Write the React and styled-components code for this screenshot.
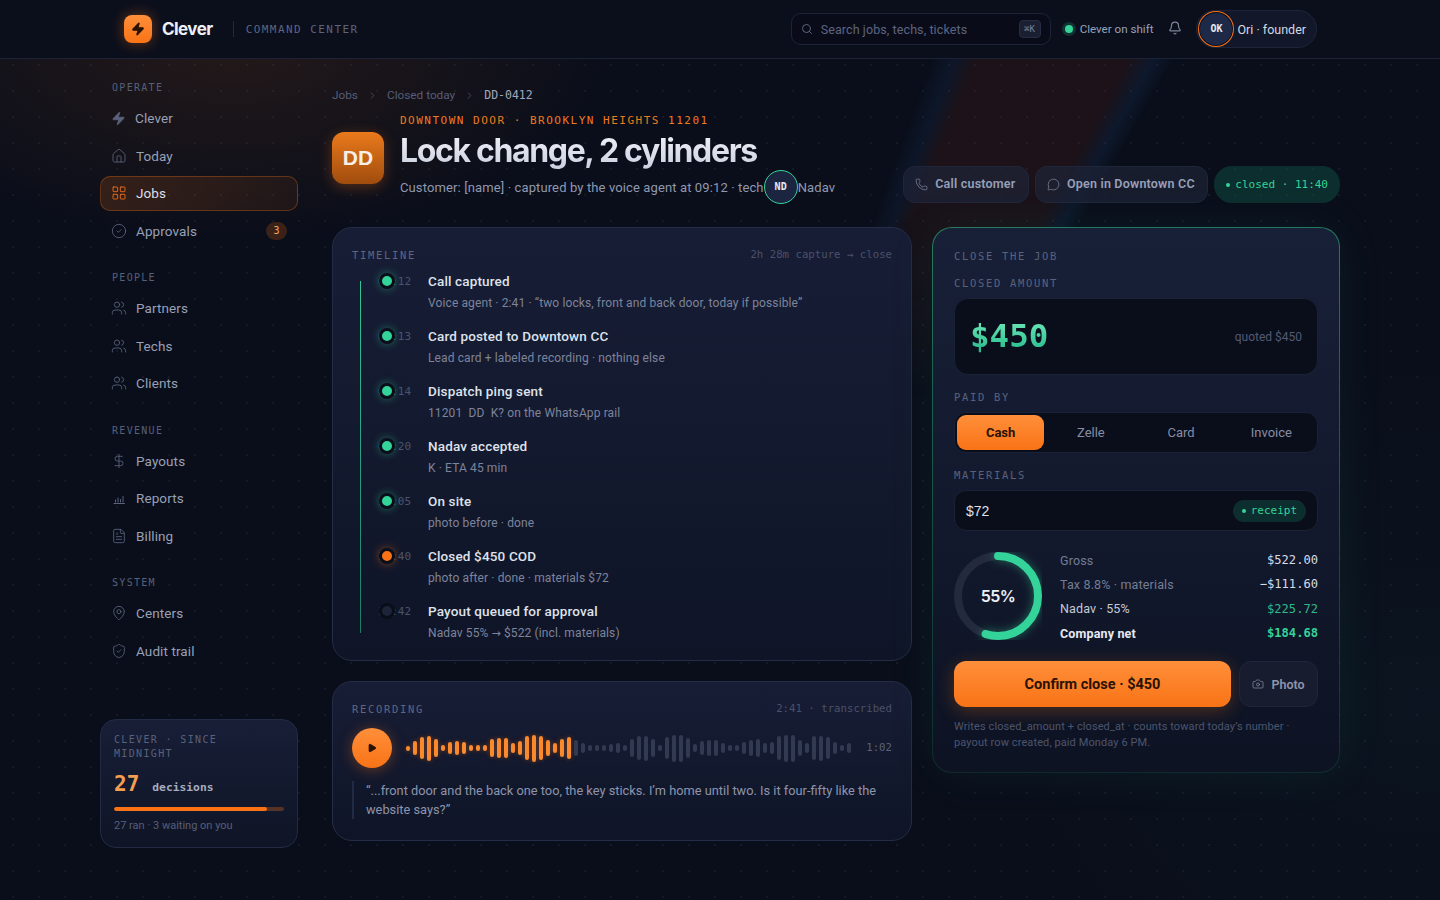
import React from "react";
import styled, { createGlobalStyle } from "styled-components";
import { Zap, Home, LayoutGrid, CircleCheck, Users, DollarSign, FileText, MapPin, ShieldCheck, Bell, Search, Phone, MessageCircle, Camera, ChevronRight, Play } from "lucide-react";

const SANS = `"Roboto", "Liberation Sans", sans-serif`;
const HEAD = `"Inter", "Liberation Sans", sans-serif`;
const MONO = `"DejaVu Sans Mono", "Liberation Mono", monospace`;

const Global = createGlobalStyle`
  html, body { margin: 0; padding: 0; height: 100%; background: #0a0e1a; }
  * { box-sizing: border-box; }
  body { font-family: ${SANS}; color: #c6cbdc; overflow: hidden; }
`;

const Page = styled.div`
  position: relative;
  width: 1440px;
  height: 900px;
  overflow: hidden;
  background:
    radial-gradient(circle at 13px 13px, rgba(150,165,210,.08) .8px, transparent 1.3px) 0 0 / 26px 26px,
    radial-gradient(520px 270px at 230px 40px, rgba(249,115,22,.11), transparent 74%),
    radial-gradient(600px 500px at 1420px 700px, rgba(20,90,90,.08), transparent 70%),
    #0a0e1a;
  &::before {
    content: "";
    position: absolute;
    inset: 0;
    background: conic-gradient(from 15deg at 505px 1216px,
      transparent 5.2deg, rgba(30,70,125,.16) 6.2deg, rgba(125,42,20,.16) 7.2deg,
      rgba(125,42,20,.16) 13.3deg, rgba(30,75,130,.18) 14.3deg, transparent 15.1deg);
    -webkit-mask-image: linear-gradient(#000 180px, transparent 400px);
    mask-image: linear-gradient(#000 180px, transparent 400px);
  }
`;

const Top = styled.header`
  position: relative;
  height: 59px;
  background: #0b0f1c;
  border-bottom: 1px solid #1d2336;
`;
const TopInner = styled.div`
  width: 1240px;
  height: 58px;
  margin: 0 auto;
  padding: 0 23px 0 24px;
  display: flex;
  align-items: center;
`;
const Logo = styled.div`
  width: 28px;
  height: 28px;
  border-radius: 8px;
  background: linear-gradient(#ff8f3a, #f97316);
  box-shadow: 0 0 14px rgba(249,115,22,.4);
  display: flex;
  align-items: center;
  justify-content: center;
  color: #2a1204;
`;
const Brand = styled.div`
  margin-left: 10px;
  font: 700 17px/1 ${HEAD};
  letter-spacing: -0.55px;
  color: #eef0f7;
`;
const Divider = styled.div`
  width: 1px;
  height: 16px;
  background: #232a3f;
  margin: 0 12px 0 20px;
`;
const Tagline = styled.div`
  font: 400 11px/1 ${MONO};
  letter-spacing: 1.45px;
  color: #5c6480;
`;
const SearchBox = styled.div`
  margin-left: auto;
  width: 260px;
  height: 32px;
  border: 1px solid #1e2438;
  border-radius: 10px;
  background: #090c18;
  display: flex;
  align-items: center;
  padding: 0 9px 0 9px;
  gap: 8px;
  color: #5c6480;
  font-size: 12.5px;
  letter-spacing: .1px;
`;
const Kbd = styled.span`
  margin-left: auto;
  width: 22px;
  height: 18px;
  border-radius: 4px;
  border: 1px solid #262d42;
  background: #1a2031;
  font: 400 9px/16px ${MONO};
  text-align: center;
  color: #78809b;
`;
const Shift = styled.div`
  margin-left: 13px;
  display: flex;
  align-items: center;
  gap: 7px;
  font-size: 11.6px;
  color: #9aa1b8;
`;
const GreenDot = styled.span`
  width: 8px;
  height: 8px;
  margin: 0 0 0 1px;
  border-radius: 50%;
  background: #34d399;
  box-shadow: 0 0 0 3px rgba(52,211,153,.18);
`;
const BellBtn = styled.div`
  margin: -2px 14px 0 15px;
  display: flex;
  color: #7d849c;
`;
const UserPill = styled.div`
  height: 38px;
  padding: 0 10px 0 2px;
  border-radius: 19px;
  border: 1px solid #1f2539;
  background: #121729;
  display: flex;
  align-items: center;
  gap: 3px;
  font-size: 12.5px;
  color: #d3d7e4;
`;
const UserAvatar = styled.div`
  width: 32px;
  height: 32px;
  border-radius: 50%;
  background: #1e2947;
  box-shadow: 0 0 0 1px #0b0f1c, 0 0 0 2px #f97316;
  margin-left: 1px;
  margin-right: 2px;
  font: 700 10px/32px ${MONO};
  text-align: center;
  color: #e6e9f3;
`;

const Shell = styled.div`
  position: relative;
  width: 1240px;
  height: 841px;
  margin: 0 auto;
  display: flex;
  gap: 32px;
`;

const Side = styled.aside`
  width: 200px;
  flex: none;
  padding: 22px 2px 52px 0;
  display: flex;
  flex-direction: column;
`;
const Group = styled.div`
  display: flex;
  flex-direction: column;
  gap: 2.5px;
  margin-bottom: 23px;
`;
const GroupLabel = styled.div`
  font: 400 10px/14px ${MONO};
  letter-spacing: 1.3px;
  color: #56607a;
  padding-left: 12px;
  margin-bottom: 3px;
`;
const NavItem = styled.div`
  height: 35px;
  border-radius: 10px;
  padding: 0 10px;
  display: flex;
  align-items: center;
  gap: 9px;
  font-size: 13.5px;
  letter-spacing: .1px;
  color: ${p => (p.$active ? "#dcdfea" : "#98a0b6")};
  border: 1px solid ${p => (p.$active ? "rgba(249,115,22,.3)" : "transparent")};
  background: ${p => (p.$active ? "linear-gradient(90deg, rgba(249,115,22,.16), rgba(249,115,22,.07))" : "none")};
  svg { color: ${p => (p.$active ? "#f97316" : "#5a627c")}; flex: none; }
`;
const Count = styled.span`
  margin-left: auto;
  width: 21px;
  height: 18px;
  border-radius: 9px;
  background: rgba(249,115,22,.2);
  font: 400 10px/18px ${MONO};
  text-align: center;
  color: #fba35e;
`;
const StatCard = styled.div`
  margin-top: auto;
  width: 198px;
  height: 129px;
  padding: 13px 13px;
  border-radius: 16px;
  border: 1px solid #232b44;
  background: linear-gradient(#171e36, #0f1526);
`;
const StatLabel = styled.div`
  max-width: 150px;
  font: 400 10px/14px ${MONO};
  letter-spacing: 1.35px;
  color: #59617b;
`;
const StatRow = styled.div`
  margin-top: 8px;
  display: flex;
  align-items: baseline;
  gap: 13px;
`;
const StatNum = styled.div`
  font: 700 21px/30px ${MONO};
  color: #f59e50;
`;
const StatWord = styled.div`
  font: 700 11.3px/1 ${MONO};
  color: #a6acbf;
`;
const Progress = styled.div`
  margin-top: 8px;
  height: 4px;
  border-radius: 2px;
  background: rgba(249,115,22,.3);
  overflow: hidden;
`;
const ProgressFill = styled.div`
  height: 100%;
  border-radius: 2px;
  background: #f97316;
`;
const StatFoot = styled.div`
  margin-top: 8px;
  font-size: 11px;
  line-height: 14px;
  color: #565e78;
`;

const Main = styled.main`
  flex: 1;
  min-width: 0;
  padding-top: 28px;
`;
const Crumbs = styled.div`
  display: flex;
  align-items: center;
  gap: 9px;
  height: 16px;
  font-size: 11.8px;
  color: #555d78;
  svg { color: #434a62; }
`;
const CrumbHere = styled.span`
  font: 400 11.5px/16px ${MONO};
  color: #a0a7bc;
`;
const Head = styled.div`
  display: flex;
  margin-top: 10px;
  height: 92px;
`;
const JobAvatar = styled.div`
  width: 52px;
  height: 52px;
  margin-top: 19px;
  margin-right: 16px;
  border-radius: 12px;
  background: linear-gradient(#ea7a1c, #a04c0e);
  box-shadow: 0 3px 14px rgba(249,115,22,.3);
  font: 700 21px/52px "Liberation Sans", sans-serif;
  text-align: center;
  color: #f6efe7;
`;
const HeadText = styled.div``;
const Eyebrow = styled.div`
  font: 400 11px/16px ${MONO};
  letter-spacing: 1.5px;
  color: #ee7a1f;
  white-space: pre;
`;
const Title = styled.h1`
  margin: 3px 0 0;
  font: 700 32px/38px ${HEAD};
  letter-spacing: -1.35px;
  background: linear-gradient(#f2f3f8, #c9cfe0);
  -webkit-background-clip: text;
  background-clip: text;
  color: transparent;
  width: max-content;
`;
const Sub = styled.div`
  margin-top: -1px;
  display: flex;
  align-items: center;
  height: 36px;
  font-size: 13px;
  letter-spacing: .12px;
  color: #9098b0;
  white-space: nowrap;
`;
const TechAvatar = styled.span`
  width: 34px;
  height: 34px;
  flex: none;
  border-radius: 50%;
  background: #1c2540;
  border: 1.5px solid #34d399;
  font: 700 10px/31px ${MONO};
  text-align: center;
  color: #e6e9f3;
`;
const Actions = styled.div`
  margin-left: auto;
  margin-top: 53px;
  display: flex;
  gap: 6px;
  height: 37px;
`;
const Ghost = styled.div`
  height: 37px;
  padding: 0 12.5px 0 11px;
  border-radius: 12px;
  border: 1px solid #20263a;
  background: rgba(30,36,56,.7);
  display: flex;
  align-items: center;
  gap: 7px;
  font: 600 12.5px/1 ${SANS};
  letter-spacing: .2px;
  color: #97a0b8;
  svg { color: #7b839c; }
`;
const ClosedPill = styled.div`
  height: 37px;
  padding: 0 12px;
  border-radius: 18px;
  background: rgba(20,90,75,.42);
  display: flex;
  align-items: center;
  gap: 5px;
  font: 400 11px/1 ${MONO};
  color: #34d399;
  white-space: pre;
`;
const TinyDot = styled.span`
  width: 4px;
  height: 4px;
  border-radius: 50%;
  background: #34d399;
`;

const Columns = styled.div`
  margin-top: 22px;
  display: flex;
  gap: 20px;
  align-items: flex-start;
`;
const LeftCol = styled.div`
  width: 580px;
  display: flex;
  flex-direction: column;
  gap: 20px;
`;
const Panel = styled.section`
  border-radius: 20px;
  border: 1px solid #252c45;
  background: linear-gradient(#171d35, #0f1527);
  padding: 20px 19px 21px;
`;
const PanelHead = styled.div`
  display: flex;
  justify-content: space-between;
  align-items: center;
  height: 14px;
`;
const PanelTitle = styled.div`
  font: 400 10.5px/14px ${MONO};
  letter-spacing: 1.68px;
  color: #5f6780;
`;
const PanelMeta = styled.div`
  font: 400 10.7px/14px ${MONO};
  color: #4a5169;
  white-space: pre;
`;
const Timeline = styled.div`
  position: relative;
  margin-top: 6px;
  padding-left: 26px;
  &::before {
    content: "";
    position: absolute;
    left: 8px;
    top: 13px;
    height: 352px;
    width: 1px;
    background: linear-gradient(#34c596, #1f7a68);
  }
`;
const Row = styled.div`
  position: relative;
  display: flex;
  height: 55px;
  padding-top: 4px;
  &:last-child { height: 41px; }
`;
const Time = styled.div`
  width: 50px;
  flex: none;
  font: 400 11px/20px ${MONO};
  color: #4b536c;
`;
const Dot = styled.span`
  position: absolute;
  left: 1px;
  top: 5px;
  width: 16px;
  height: 16px;
  border-radius: 50%;
  border: 3px solid #0a0e1a;
  background: ${p => p.$c};
  box-shadow: 0 0 8px ${p => p.$glow};
`;
const RowTitle = styled.div`
  font-size: 13.5px;
  font-weight: 500;
  line-height: 18px;
  letter-spacing: .15px;
  color: #dfe2ec;
`;
const RowSub = styled.div`
  margin-top: 4px;
  font-size: 12px;
  line-height: 18px;
  letter-spacing: .12px;
  color: #7d849c;
  white-space: pre;
`;
const Arrow = styled.span`
  font-family: "DejaVu Sans", sans-serif;
  font-size: 11px;
`;
const Player = styled.div`
  display: flex;
  align-items: center;
  margin-top: 12px;
`;
const PlayBtn = styled.div`
  width: 40px;
  height: 40px;
  border-radius: 50%;
  flex: none;
  background: linear-gradient(#ff8f3a, #f97316);
  box-shadow: 0 2px 14px rgba(249,115,22,.35);
  display: flex;
  align-items: center;
  justify-content: center;
  color: #2a1204;
  margin-right: 14px;
`;
const Wave = styled.div`
  display: flex;
  align-items: center;
  gap: 3px;
  height: 30px;
`;
const Bar = styled.span`
  width: 4px;
  border-radius: 2px;
  background: ${p => (p.$on ? "#f98a2e" : "#323a52")};
  box-shadow: ${p => (p.$on ? "0 0 5px rgba(249,115,22,.4)" : "none")};
`;
const Elapsed = styled.div`
  margin-left: auto;
  font: 400 10.7px/1 ${MONO};
  color: #5a627b;
`;
const Quote = styled.blockquote`
  margin: 13px 0 0;
  border-left: 2px solid #222a44;
  padding-left: 12px;
  font-size: 12.8px;
  line-height: 19px;
  color: #8d94ac;
`;

const ClosePanel = styled.section`
  width: 408px;
  border-radius: 20px;
  border: 1px solid transparent;
  background:
    linear-gradient(#182038, #0d1323) padding-box,
    linear-gradient(rgba(52,211,153,.55), rgba(52,211,153,.14)) border-box;
  box-shadow: 0 0 50px rgba(52,211,153,.07);
  padding: 21px 21px 21px;
`;
const FieldLabel = styled.div`
  font: 400 10.5px/14px ${MONO};
  letter-spacing: 1.68px;
  color: #5a627b;
  margin-top: ${p => p.$mt || 0}px;
`;
const AmountBox = styled.div`
  margin-top: 8px;
  height: 77px;
  border-radius: 14px;
  border: 1px solid #1c2236;
  background: #0a0e1b;
  display: flex;
  align-items: center;
  justify-content: space-between;
  padding: 0 15px;
`;
const Amount = styled.div`
  font: 700 32.5px/1 ${MONO};
  background: linear-gradient(#6ee7b7, #22b98a);
  -webkit-background-clip: text;
  background-clip: text;
  color: transparent;
`;
const Quoted = styled.div`
  font-size: 12px;
  color: #525a74;
`;
const Segs = styled.div`
  margin-top: 8px;
  height: 41px;
  border-radius: 12px;
  border: 1px solid #1c2236;
  background: #0a0e1b;
  padding: 2px;
  display: grid;
  grid-template-columns: repeat(4, 1fr);
  gap: 3px;
`;
const Seg = styled.div`
  border-radius: 9px;
  display: flex;
  align-items: center;
  justify-content: center;
  font-size: 13px;
  font-weight: ${p => (p.$on ? 700 : 400)};
  color: ${p => (p.$on ? "#2a1204" : "#858ca4")};
  background: ${p => (p.$on ? "linear-gradient(#ff8f3a, #f97316)" : "none")};
`;
const MatBox = styled.div`
  margin-top: 8px;
  height: 41px;
  border-radius: 12px;
  border: 1px solid #1c2236;
  background: #0a0e1b;
  display: flex;
  align-items: center;
  justify-content: space-between;
  padding: 0 11px;
  font: 400 14px/1 "Liberation Sans", sans-serif;
  color: #dde0ea;
`;
const Receipt = styled.div`
  height: 22px;
  padding: 0 9px;
  border-radius: 11px;
  background: rgba(20,90,75,.42);
  display: flex;
  align-items: center;
  gap: 5px;
  font: 400 11px/1 ${MONO};
  color: #34d399;
`;
const Split = styled.div`
  margin-top: 21px;
  height: 88px;
  display: flex;
  gap: 18px;
`;
const RingWrap = styled.div`
  position: relative;
  width: 88px;
  height: 88px;
  flex: none;
`;
const RingLabel = styled.div`
  position: absolute;
  inset: 0;
  display: flex;
  align-items: center;
  justify-content: center;
  font: 600 16px/1 ${HEAD};
  letter-spacing: -.5px;
  color: #eef0f7;
`;
const Lines = styled.div`
  flex: 1;
  display: flex;
  flex-direction: column;
  gap: 6.4px;
  margin-top: -1px;
`;
const Line = styled.div`
  height: 18px;
  flex: none;
  display: flex;
  justify-content: space-between;
  align-items: center;
  font-size: 12.5px;
  letter-spacing: .15px;
  font-weight: ${p => (p.$bold ? 700 : 400)};
  color: ${p => p.$c};
`;
const Val = styled.span`
  font: ${p => (p.$bold ? 700 : 400)} 12.1px/1 ${MONO};
  letter-spacing: 0;
  color: ${p => p.$c};
`;
const Buttons = styled.div`
  margin-top: 21px;
  display: flex;
  gap: 8px;
`;
const Primary = styled.div`
  flex: 1;
  height: 46px;
  border-radius: 12px;
  background: linear-gradient(#ff8f3a, #f97316);
  box-shadow: 0 4px 18px rgba(249,115,22,.28);
  display: flex;
  align-items: center;
  justify-content: center;
  font-size: 14.5px;
  font-weight: 700;
  color: #2a1204;
`;
const PhotoBtn = styled.div`
  width: 79px;
  height: 46px;
  border-radius: 12px;
  border: 1px solid #20263a;
  background: #171c2e;
  display: flex;
  align-items: center;
  justify-content: center;
  gap: 7px;
  font-size: 12.5px;
  font-weight: 600;
  color: #8d94ac;
`;
const Note = styled.div`
  margin-top: 12px;
  font-size: 11px;
  line-height: 16px;
  letter-spacing: .1px;
  color: #4d556e;
`;

const BarsIcon = ({ size = 16 }) => (
  <svg width={size} height={size} viewBox="0 0 16 16" fill="none" stroke="currentColor" strokeWidth="1" strokeLinecap="round">
    <path d="M3 13.5h10.5M4.5 12v-2M7 12V8M9.500 12V9.500M12 12V6.500" />
  </svg>
);

const NAV = [
  ["OPERATE", [[Zap, "Clever", 15, true], [Home, "Today"], [LayoutGrid, "Jobs", 0, false, true], [CircleCheck, "Approvals", 0, false, false, 3]]],
  ["PEOPLE", [[Users, "Partners"], [Users, "Techs"], [Users, "Clients"]]],
  ["REVENUE", [[DollarSign, "Payouts"], [BarsIcon, "Reports"], [FileText, "Billing"]]],
  ["SYSTEM", [[MapPin, "Centers"], [ShieldCheck, "Audit trail"]]],
];

const ROWS = [
  ["09:12", "Call captured", "Voice agent · 2:41 · “two locks, front and back door, today if possible”", "g"],
  ["09:13", "Card posted to Downtown CC", "Lead card + labeled recording · nothing else", "g"],
  ["09:14", "Dispatch ping sent", "11201  DD  K? on the WhatsApp rail", "g"],
  ["09:20", "Nadav accepted", "K · ETA 45 min", "g"],
  ["10:05", "On site", "photo before · done", "g"],
  ["11:40", "Closed $450 COD", "photo after · done · materials $72", "o"],
  ["11:42", "Payout queued for approval", <>Nadav 55% <Arrow>→</Arrow> $522 (incl. materials)</>, "n"],
];
const DOTS = {
  g: ["#34d399", "rgba(52,211,153,.45)"],
  o: ["#f97316", "rgba(249,115,22,.45)"],
  n: ["#1d2438", "transparent"],
};

const WAVE = [5,14,22,25,18,6,12,14,12,6,6,6,18,20,20,10,14,24,27,24,16,10,18,22,16,10,6,6,6,8,10,6,18,24,25,18,6,22,27,27,20,8,14,16,16,10,6,6,12,16,18,10,12,24,27,27,16,10,24,25,22,12,6,10];

export default function App() {
  return (
    <Page>
      <Global />
      <Top>
        <TopInner>
          <Logo><Zap size={14} fill="currentColor" /></Logo>
          <Brand>Clever</Brand>
          <Divider />
          <Tagline>COMMAND CENTER</Tagline>
          <SearchBox>
            <Search size={12} />
            Search jobs, techs, tickets
            <Kbd>⌘K</Kbd>
          </SearchBox>
          <Shift><GreenDot />Clever on shift</Shift>
          <BellBtn><Bell size={14} /></BellBtn>
          <UserPill><UserAvatar>OK</UserAvatar>Ori · founder</UserPill>
        </TopInner>
      </Top>
      <Shell>
        <Side>
          {NAV.map(([label, items]) => (
            <Group key={label}>
              <GroupLabel>{label}</GroupLabel>
              {items.map(([Icon, text, size, fill, active, count]) => (
                <NavItem key={text} $active={active}>
                  <Icon size={size || 16} strokeWidth={1.3} fill={fill ? "currentColor" : "none"} />
                  {text}
                  {count ? <Count>{count}</Count> : null}
                </NavItem>
              ))}
            </Group>
          ))}
          <StatCard>
            <StatLabel>CLEVER · SINCE MIDNIGHT</StatLabel>
            <StatRow><StatNum>27</StatNum><StatWord>decisions</StatWord></StatRow>
            <Progress><ProgressFill style={{ width: "90%" }} /></Progress>
            <StatFoot>27 ran · 3 waiting on you</StatFoot>
          </StatCard>
        </Side>
        <Main>
          <Crumbs>
            <span>Jobs</span><ChevronRight size={11} />
            <span>Closed today</span><ChevronRight size={11} />
            <CrumbHere>DD-0412</CrumbHere>
          </Crumbs>
          <Head>
            <JobAvatar>DD</JobAvatar>
            <HeadText>
              <Eyebrow>DOWNTOWN DOOR · BROOKLYN HEIGHTS 11201</Eyebrow>
              <Title>Lock change, 2 cylinders</Title>
              <Sub>Customer: [name] · captured by the voice agent at 09:12 · tech<TechAvatar>ND</TechAvatar>Nadav</Sub>
            </HeadText>
            <Actions>
              <Ghost><Phone size={13} strokeWidth={1.4} />Call customer</Ghost>
              <Ghost><MessageCircle size={13} strokeWidth={1.4} />Open in Downtown CC</Ghost>
              <ClosedPill><TinyDot />closed · 11:40</ClosedPill>
            </Actions>
          </Head>
          <Columns>
            <LeftCol>
              <Panel>
                <PanelHead>
                  <PanelTitle>TIMELINE</PanelTitle>
                  <PanelMeta>2h 28m capture → close</PanelMeta>
                </PanelHead>
                <Timeline>
                  {ROWS.map(([time, title, sub, kind]) => (
                    <Row key={title}>
                      <Time>{time}</Time>
                      <Dot $c={DOTS[kind][0]} $glow={DOTS[kind][1]} />
                      <div>
                        <RowTitle>{title}</RowTitle>
                        <RowSub>{sub}</RowSub>
                      </div>
                    </Row>
                  ))}
                </Timeline>
              </Panel>
              <Panel>
                <PanelHead>
                  <PanelTitle>RECORDING</PanelTitle>
                  <PanelMeta>2:41 · transcribed</PanelMeta>
                </PanelHead>
                <Player>
                  <PlayBtn><Play size={10} fill="currentColor" /></PlayBtn>
                  <Wave>
                    {WAVE.map((h, i) => <Bar key={i} $on={i < 24} style={{ height: h }} />)}
                  </Wave>
                  <Elapsed>1:02</Elapsed>
                </Player>
                <Quote>“...front door and the back one too, the key sticks. I’m home until two. Is it four-fifty like the website says?”</Quote>
              </Panel>
            </LeftCol>
            <ClosePanel>
              <FieldLabel>CLOSE THE JOB</FieldLabel>
              <FieldLabel $mt={13}>CLOSED AMOUNT</FieldLabel>
              <AmountBox><Amount>$450</Amount><Quoted>quoted $450</Quoted></AmountBox>
              <FieldLabel $mt={15}>PAID BY</FieldLabel>
              <Segs>
                <Seg $on>Cash</Seg><Seg>Zelle</Seg><Seg>Card</Seg><Seg>Invoice</Seg>
              </Segs>
              <FieldLabel $mt={15}>MATERIALS</FieldLabel>
              <MatBox>$72<Receipt><TinyDot />receipt</Receipt></MatBox>
              <Split>
                <RingWrap>
                  <svg width="88" height="88" viewBox="0 0 88 88">
                    <circle cx="44" cy="44" r="40" fill="none" stroke="#232a3e" strokeWidth="8" />
                    <circle cx="44" cy="44" r="40" fill="none" stroke="#34d399" strokeWidth="8" strokeLinecap="round" strokeDasharray="138.2 251.3" transform="rotate(-90 44 44)" filter="drop-shadow(0 0 5px rgba(52,211,153,.45))" />
                  </svg>
                  <RingLabel>55%</RingLabel>
                </RingWrap>
                <Lines>
                  <Line $c="#757c95">Gross<Val $c="#d8dbe6">$522.00</Val></Line>
                  <Line $c="#757c95">Tax 8.8% · materials<Val $c="#d8dbe6">−$111.60</Val></Line>
                  <Line $c="#c5c9d8">Nadav · 55%<Val $c="#2fb98c">$225.72</Val></Line>
                  <Line $c="#e6e9f2" $bold>Company net<Val $c="#34d399" $bold>$184.68</Val></Line>
                </Lines>
              </Split>
              <Buttons>
                <Primary>Confirm close · $450</Primary>
                <PhotoBtn><Camera size={12} strokeWidth={1.4} />Photo</PhotoBtn>
              </Buttons>
              <Note>Writes closed_amount + closed_at · counts toward today’s number · payout row created, paid Monday 6 PM.</Note>
            </ClosePanel>
          </Columns>
        </Main>
      </Shell>
    </Page>
  );
}
